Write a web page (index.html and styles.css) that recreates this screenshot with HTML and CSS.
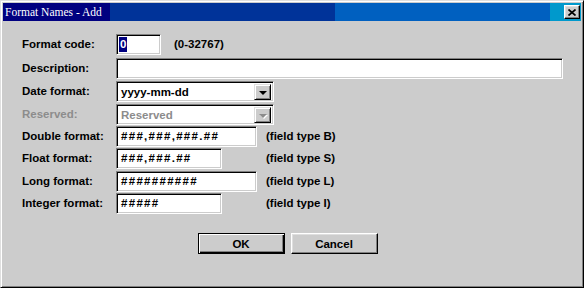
FILE: index.html
```html
<!DOCTYPE html>
<html lang="en">
<head>
  <meta charset="UTF-8">
  <title>Format Names - Add</title>
  <link rel="stylesheet" href="styles.css">
</head>
<body>
  <div class="window">
    <div class="titlebar">
      <span class="title">Format Names - Add</span>
      <button class="close-btn" type="button">
        <svg width="8" height="7" viewBox="0 0 8 7">
          <path d="M0.5 0.5 L7.5 6.5 M7.5 0.5 L0.5 6.5" stroke="#000" stroke-width="1.7" fill="none"/>
        </svg>
      </button>
    </div>

    <div class="format-form">
      <span class="lbl">Format code:</span>
      <div class="code-cell">
        <div class="field w-code"><span class="sel">0</span></div>
        <span class="note">(0-32767)</span>
      </div>

      <span class="lbl">Description:</span>
      <div class="field w-desc wide"></div>

      <span class="lbl">Date format:</span>
      <div class="field combo wide">
        <span class="combo-text">yyyy-mm-dd</span>
        <span class="combo-btn"><span class="arrow"></span></span>
      </div>

      <span class="lbl disabled">Reserved:</span>
      <div class="field combo wide">
        <span class="combo-text disabled">Reserved</span>
        <span class="combo-btn"><span class="arrow off"></span></span>
      </div>

      <span class="lbl">Double format:</span>
      <div class="field mask w-long">###,###,###.##</div>
      <span class="note">(field type B)</span>

      <span class="lbl">Float format:</span>
      <div class="field mask w-short">###,###.##</div>
      <span class="note">(field type S)</span>

      <span class="lbl">Long format:</span>
      <div class="field mask w-long">##########</div>
      <span class="note">(field type L)</span>

      <span class="lbl">Integer format:</span>
      <div class="field mask w-short">#####</div>
      <span class="note">(field type I)</span>
    </div>

    <div class="actions">
      <button class="btn default" type="button">OK</button>
      <button class="btn" type="button">Cancel</button>
    </div>
  </div>
</body>
</html>
```

FILE: styles.css
```css
* {
  margin: 0;
  padding: 0;
  box-sizing: border-box;
}

body {
  width: 584px;
  height: 288px;
  overflow: hidden;
  background-color: #cccccc;
  font-family: "Liberation Sans", Arial, sans-serif;
  font-size: 11.5px;
  font-weight: bold;
  color: #000;
}

.window {
  width: 584px;
  height: 288px;
  padding: 2px;
  background-color: #cccccc;
  border: 1px solid;
  border-color: #dfdfdf #000 #000 #dfdfdf;
  box-shadow: inset 1px 1px #fff, inset -1px -1px #808080;
}

.titlebar {
  height: 18px;
  display: flex;
  align-items: center;
  justify-content: space-between;
  background: linear-gradient(to right,
    #000080 0, #000080 107px,
    #003399 107px, #003399 332px,
    #0060c0 332px, #0060c0 547px,
    #0099cc 547px);
}

.title {
  padding-left: 2px;
  color: #fff;
  font-family: "Liberation Serif", "Times New Roman", serif;
  font-weight: normal;
  font-size: 11.5px;
  line-height: 18px;
}

.close-btn {
  width: 16px;
  height: 14px;
  margin-right: 1px;
  display: flex;
  align-items: center;
  justify-content: center;
  background-color: #cccccc;
  border: 1px solid;
  border-color: #fff #000 #000 #fff;
  box-shadow: inset -1px -1px #808080, inset 1px 1px #dfdfdf;
}

.format-form {
  display: grid;
  grid-template-columns: 94px 150px auto;
  grid-template-rows: 24px 23px 23px 22px 22px 23px 22px 22px;
  margin-top: 13px;
  padding-left: 19px;
}

.lbl {
  height: 21px;
  line-height: 21px;
  white-space: nowrap;
  color: #000;
}

.lbl.disabled,
.combo-text.disabled {
  color: #8c8c8c;
}

.field {
  height: 21px;
  padding-left: 4px;
  line-height: 19px;
  background-color: #fff;
  border: 1px solid;
  border-color: #808080 #fff #fff #808080;
  box-shadow: inset 1px 1px #000, inset -1px -1px #cccccc;
  white-space: nowrap;
}

.mask {
  letter-spacing: 1.3px;
}

.wide {
  grid-column: 2 / 4;
}

.w-code { width: 45px; padding-left: 2px; }
.w-desc { width: 447px; }
.w-long { width: 141px; }
.w-short { width: 106px; }

.code-cell {
  grid-column: 2 / 4;
  display: flex;
  align-items: flex-start;
  gap: 13px;
}

.sel {
  display: inline-block;
  margin-top: 2px;
  padding: 0 1px;
  height: 15px;
  line-height: 15px;
  background-color: #000080;
  color: #fff;
}

.note {
  height: 21px;
  line-height: 21px;
  white-space: nowrap;
}

.combo {
  width: 158px;
  display: flex;
  justify-content: space-between;
  padding: 2px 2px 2px 4px;
}

.combo-text {
  line-height: 16px;
}

.combo-btn {
  width: 17px;
  height: 16px;
  display: flex;
  align-items: center;
  justify-content: center;
  background-color: #cccccc;
  border: 1px solid;
  border-color: #dfdfdf #000 #000 #dfdfdf;
  box-shadow: inset 1px 1px #fff, inset -1px -1px #808080;
}

.arrow {
  width: 0;
  height: 0;
  margin-top: 1px;
  border-left: 4px solid transparent;
  border-right: 4px solid transparent;
  border-top: 4px solid #000;
}

.arrow.off {
  border-top-color: #8c8c8c;
  filter: drop-shadow(1px 1px 0 #fff);
}

.actions {
  display: flex;
  justify-content: center;
  gap: 6px;
  margin-top: 18px;
  padding-right: 9px;
}

.btn {
  width: 87px;
  height: 21px;
  font-family: "Liberation Sans", Arial, sans-serif;
  font-size: 11.5px;
  font-weight: bold;
  color: #000;
  background-color: #cccccc;
  border: 1px solid;
  border-color: #fff #000 #000 #fff;
  box-shadow: inset -1px -1px #808080, inset 1px 1px #dfdfdf;
}

.btn.default {
  border: 1px solid #000;
  box-shadow: inset 1px 1px #fff, inset -1px -1px #000, inset -2px -2px #808080;
}
```
